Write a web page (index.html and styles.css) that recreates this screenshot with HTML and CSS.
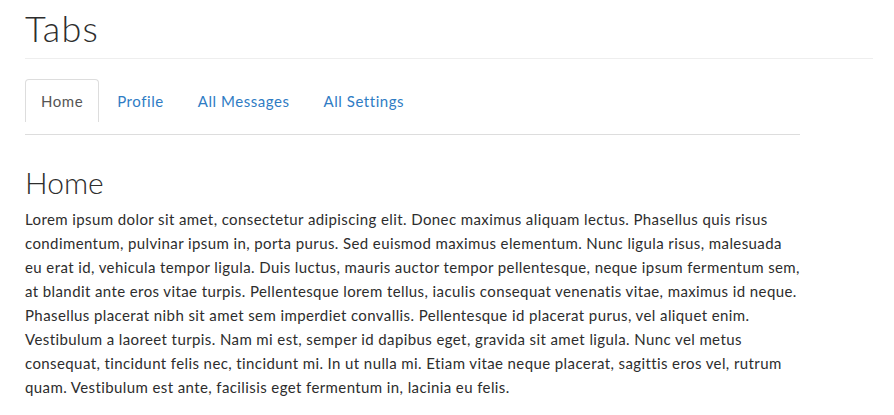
FILE: index.html
```html
<!DOCTYPE html>
<html lang="en">
<head>
<meta charset="utf-8">
<title>Tabs</title>
<link rel="stylesheet" href="styles.css">
</head>
<body>
<header class="page-header">
  <h1 class="page-title">Tabs</h1>
</header>
<main class="content">
  <nav class="tabs">
    <a class="tab active" href="#">Home</a>
    <a class="tab" href="#">Profile</a>
    <a class="tab" href="#">All Messages</a>
    <a class="tab" href="#">All Settings</a>
  </nav>
  <section class="pane">
    <h2 class="pane-title">Home</h2>
    <p class="pane-text">Lorem ipsum dolor sit amet, consectetur adipiscing elit. Donec maximus aliquam lectus. Phasellus quis risus condimentum, pulvinar ipsum in, porta purus. Sed euismod maximus elementum. Nunc ligula risus, malesuada eu erat id, vehicula tempor ligula. Duis luctus, mauris auctor tempor pellentesque, neque ipsum fermentum sem, at blandit ante eros vitae turpis. Pellentesque lorem tellus, iaculis consequat venenatis vitae, maximus id neque. Phasellus placerat nibh sit amet sem imperdiet convallis. Pellentesque id placerat purus, vel aliquet enim. Vestibulum a laoreet turpis. Nam mi est, semper id dapibus eget, gravida sit amet ligula. Nunc vel metus consequat, tincidunt felis nec, tincidunt mi. In ut nulla mi. Etiam vitae neque placerat, sagittis eros vel, rutrum quam. Vestibulum est ante, facilisis eget fermentum in, lacinia eu felis.</p>
  </section>
</main>
</body>
</html>
```

FILE: styles.css
```css
* { box-sizing: border-box; }
html, body { background: #fff; }
body {
  margin: 0;
  padding: 8px 21px 0 25px;
  font-family: Lato, "Open Sans", sans-serif;
  font-size: 15px;
  line-height: 1.6;
  color: #2d2d2d;
}
.page-header {
  border-bottom: 1px solid #eee;
  padding-bottom: 10px;
  margin-bottom: 20px;
}
.page-title {
  margin: 0;
  font-size: 36px;
  font-weight: 300;
  line-height: 40px;
  letter-spacing: 1.2px;
  color: #2d2d2d;
}
.content { width: 775px; }
.tabs {
  display: flex;
  gap: 2px;
  padding-bottom: 12px;
  border-bottom: 1px solid #ddd;
}
.tab {
  display: block;
  padding: 10px 15px;
  line-height: 22px;
  letter-spacing: 0.55px;
  color: #2f7cc4;
  text-decoration: none;
  border: 1px solid transparent;
  border-bottom: 0;
  border-radius: 4px 4px 0 0;
}
.tab.active {
  color: #555;
  border-color: #ddd;
}
.pane-title {
  margin: 30px 0 8px;
  font-size: 30px;
  font-weight: 300;
  line-height: 34px;
  color: #2d2d2d;
}
.pane-text {
  margin: 0;
  line-height: 24px;
  letter-spacing: 0.4px;
}
```
